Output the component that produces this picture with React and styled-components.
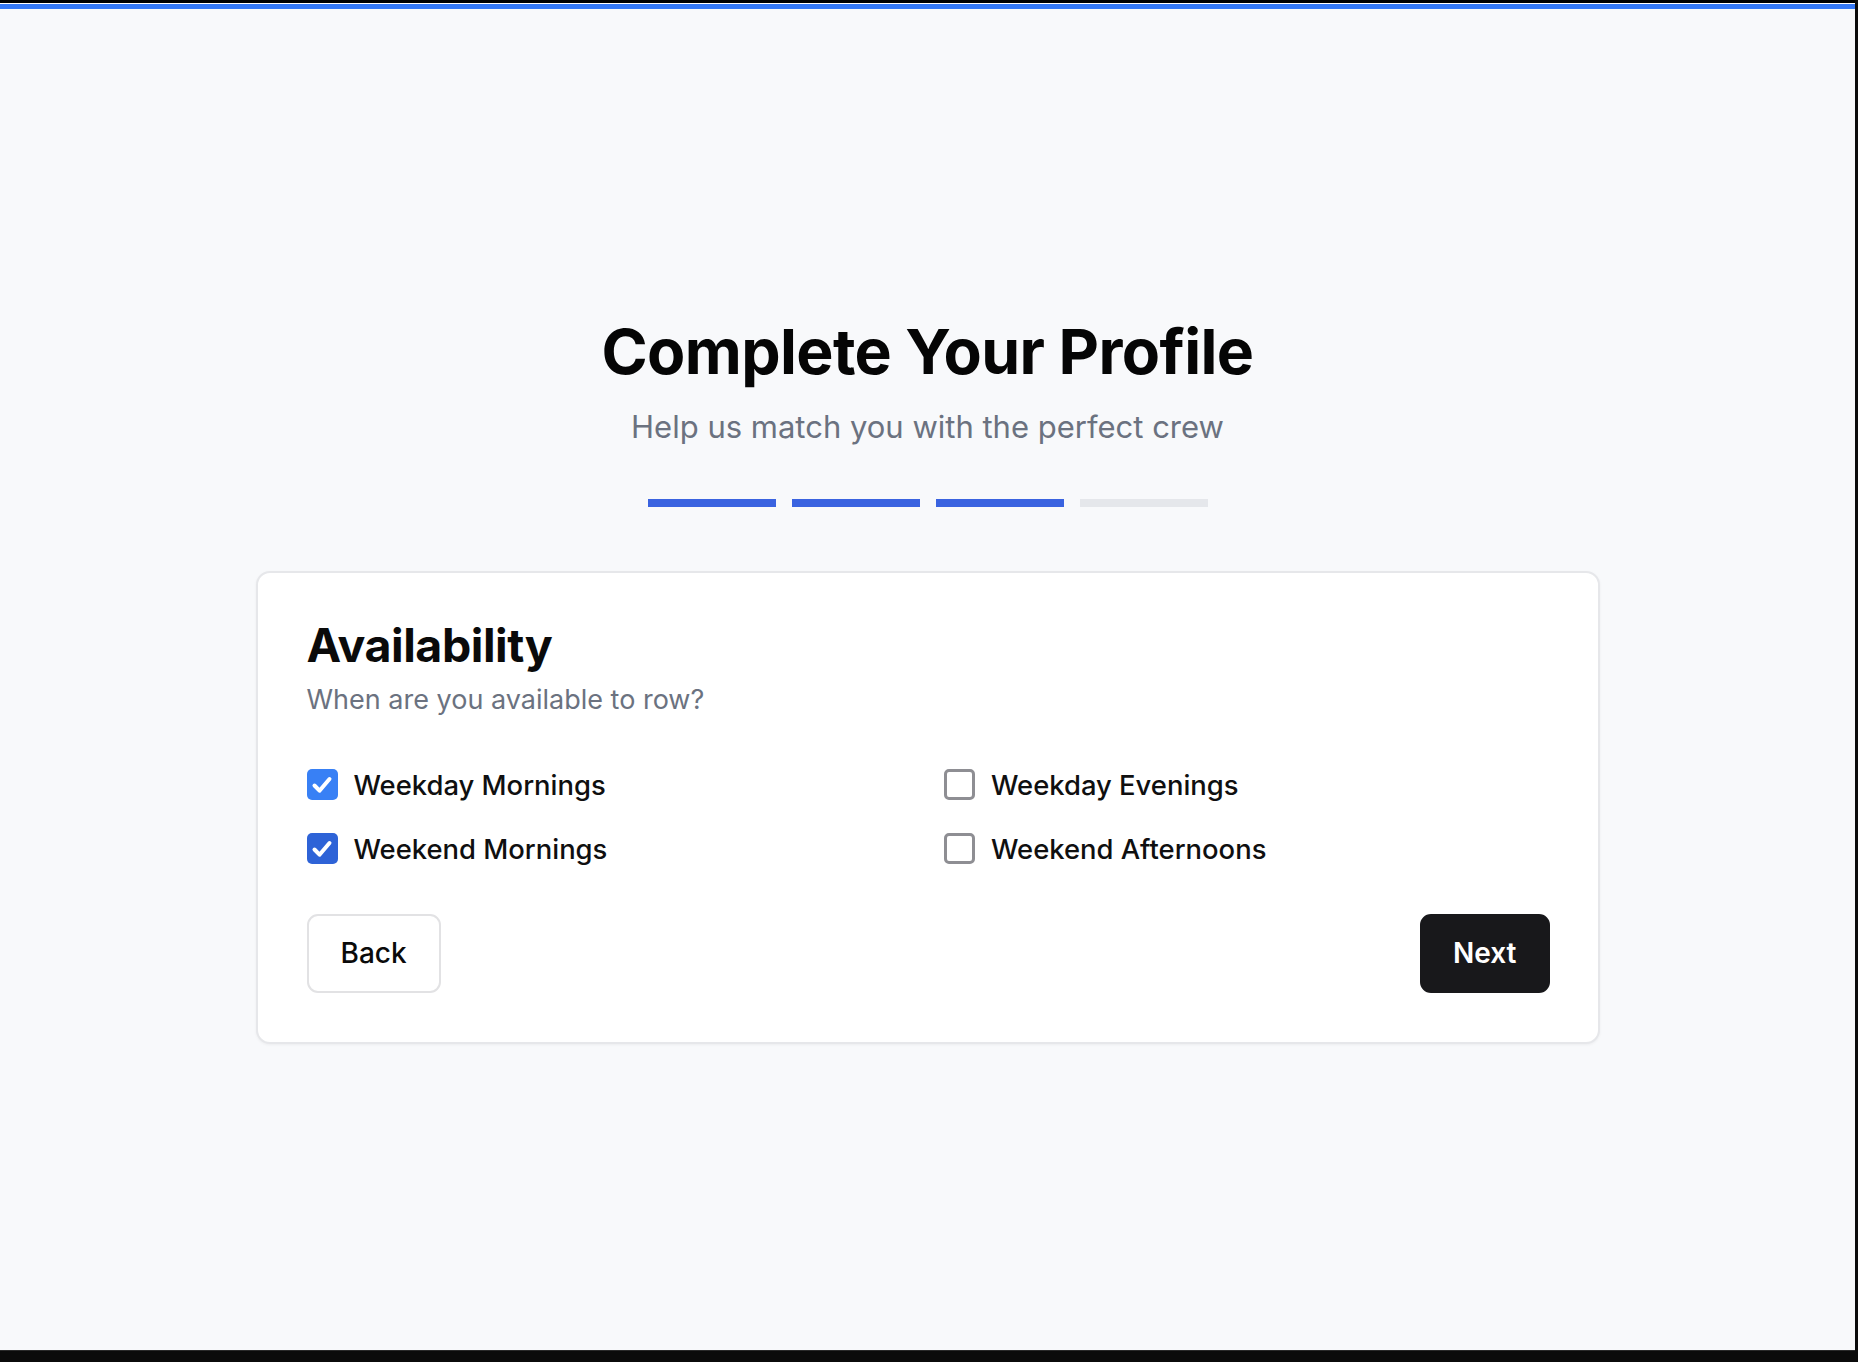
import React, { useState } from 'react';
import styled, { createGlobalStyle } from 'styled-components';

const GlobalStyle = createGlobalStyle`
  * { box-sizing: border-box; }
  html, body { margin: 0; padding: 0; }
  body {
    font-family: Inter, "Noto Sans", "Liberation Sans", sans-serif;
    background: #0b0b0b;
  }
`;

const Frame = styled.div`
  height: 100vh;
  display: flex;
  flex-direction: column;
  background: #0b0b0b;
`;

const TopStrip = styled.div`
  height: 9px;
  flex-shrink: 0;
  border-top: 3px solid #000;
  border-bottom: 5px solid #3478f6;
  background: #fff;
  margin-right: 3px;
`;

const Page = styled.main`
  flex: 1;
  margin-right: 3px;
  padding-bottom: 2px;
  background: #f8f9fb;
  display: flex;
  flex-direction: column;
  align-items: center;
  justify-content: center;
  border-bottom: 1px solid #2a2a2a;
`;

const BottomStrip = styled.div`
  height: 11px;
  flex-shrink: 0;
`;

const Title = styled.h1`
  margin: 0;
  font-size: 62.5px;
  line-height: 74px;
  font-weight: 700;
  letter-spacing: -0.01em;
  color: #050505;
`;

const Subtitle = styled.p`
  margin: 21px 0 0;
  font-size: 31px;
  line-height: 36px;
  color: #6b7280;
`;

const Steps = styled.div`
  display: flex;
  gap: 16px;
  margin-top: 54px;
`;

const Step = styled.div`
  width: 128px;
  height: 8px;
  background: ${(p) => (p.$done ? '#3a63e0' : '#e5e7eb')};
`;

const Card = styled.section`
  margin-top: 64px;
  width: 1344px;
  background: #fff;
  border: 2px solid #e6e7ea;
  border-radius: 14px;
  box-shadow: 0 1px 3px rgba(0, 0, 0, 0.05);
  padding: 47px 48px 49px 49px;
`;

const CardTitle = styled.h2`
  margin: 0;
  font-size: 46.5px;
  line-height: 50px;
  font-weight: 700;
  letter-spacing: -0.01em;
  color: #0a0a0a;
`;

const CardText = styled.p`
  margin: 12px 0 0;
  font-size: 27px;
  line-height: 36px;
  color: #6b7280;
`;

const Options = styled.div`
  display: grid;
  grid-template-columns: 1fr 1fr;
  column-gap: 32px;
  row-gap: 24px;
  margin-top: 47px;
`;

const Option = styled.label`
  display: flex;
  align-items: center;
  gap: 16px;
  height: 40px;
  cursor: pointer;
  font-size: 27.4px;
  font-weight: 500;
  color: #0f0f10;
`;

const Box = styled.span`
  width: 31px;
  height: 31px;
  border-radius: 5px;
  display: flex;
  align-items: center;
  justify-content: center;
  flex-shrink: 0;
  background: ${(p) => (p.$checked ? p.$tone : '#fff')};
  border: ${(p) => (p.$checked ? 'none' : '3px solid #8e8e93')};
`;

const Actions = styled.div`
  display: flex;
  justify-content: space-between;
  margin-top: 45px;
`;

const Button = styled.button`
  height: 79px;
  padding: 0 ${(p) => (p.$primary ? '31px' : '32px')};
  border-radius: 11px;
  font-family: inherit;
  font-size: 28px;
  font-weight: ${(p) => (p.$primary ? 600 : 500)};
  cursor: pointer;
  background: ${(p) => (p.$primary ? '#18181b' : '#fff')};
  color: ${(p) => (p.$primary ? '#fff' : '#0a0a0a')};
  border: 2px solid ${(p) => (p.$primary ? '#18181b' : '#e2e2e4')};
`;

const options = [
  { label: 'Weekday Mornings', checked: true, tone: '#3880f5' },
  { label: 'Weekday Evenings', checked: false },
  { label: 'Weekend Mornings', checked: true, tone: '#2e63d7' },
  { label: 'Weekend Afternoons', checked: false },
];

const Check = () => (
  <svg width="24" height="24" viewBox="0 0 24 24" fill="none">
    <path d="M4.5 12.5l5 5.2L19.5 6" stroke="#fff" strokeWidth="4" strokeLinecap="round" strokeLinejoin="round" />
  </svg>
);

export default function App() {
  const [state, setState] = useState(options.map((o) => o.checked));

  const toggle = (i) => setState((s) => s.map((v, j) => (j === i ? !v : v)));

  return (
    <Frame>
      <GlobalStyle />
      <TopStrip />
      <Page>
        <Title>Complete Your Profile</Title>
        <Subtitle>Help us match you with the perfect crew</Subtitle>
        <Steps>
          <Step $done />
          <Step $done />
          <Step $done />
          <Step />
        </Steps>
        <Card>
          <CardTitle>Availability</CardTitle>
          <CardText>When are you available to row?</CardText>
          <Options>
            {options.map((o, i) => (
              <Option key={o.label} onClick={() => toggle(i)}>
                <Box $checked={state[i]} $tone={o.tone || '#3880f5'}>
                  {state[i] && <Check />}
                </Box>
                {o.label}
              </Option>
            ))}
          </Options>
          <Actions>
            <Button>Back</Button>
            <Button $primary>Next</Button>
          </Actions>
        </Card>
      </Page>
      <BottomStrip />
    </Frame>
  );
}
